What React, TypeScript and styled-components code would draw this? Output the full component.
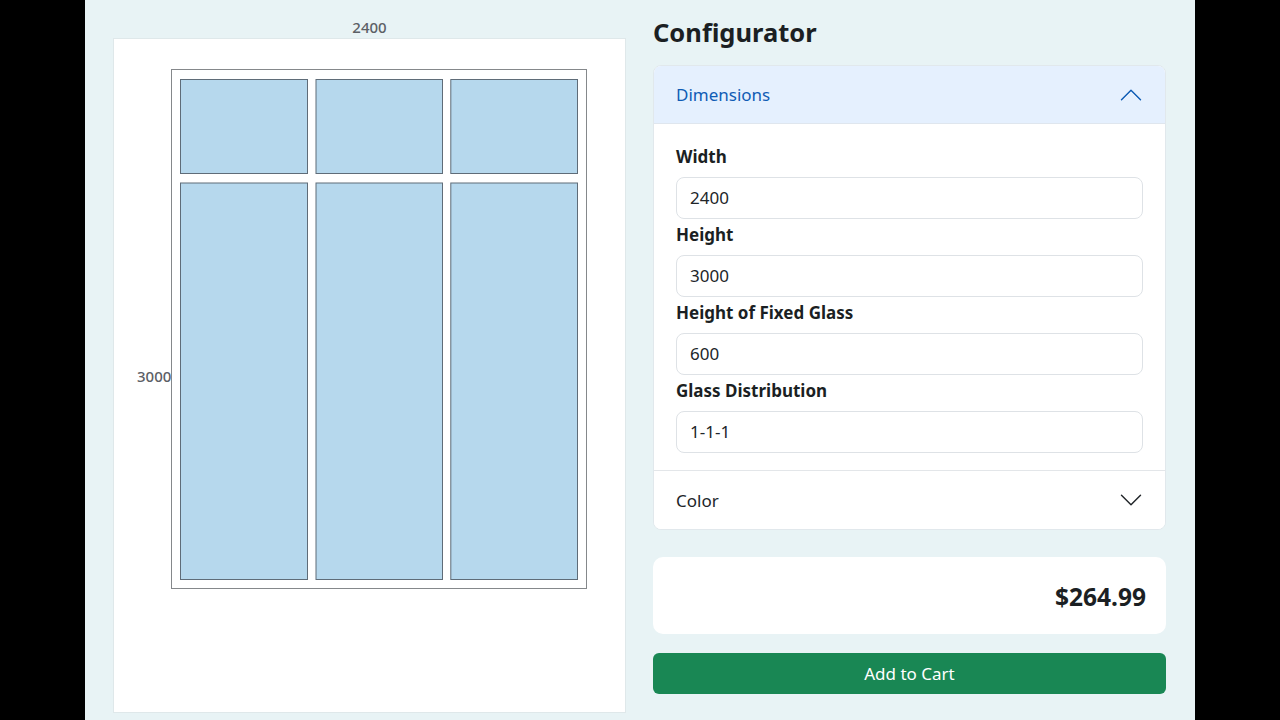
import styled, { createGlobalStyle } from "styled-components";
import { ChevronDown, ChevronUp } from "lucide-react";

const GlobalStyle = createGlobalStyle`
  html, body {
    margin: 0;
    height: 100%;
    background: #000;
    font-family: "Noto Sans", "Open Sans", sans-serif;
    color: #1b1f23;
  }
`;

const Stage = styled.div`
  width: 1110px;
  height: 720px;
  margin: 0 auto;
  box-sizing: border-box;
  padding: 0 29px 0 28px;
  background: #e8f3f5;
  display: grid;
  grid-template-columns: 513px 513px;
  column-gap: 27px;
  overflow: hidden;
`;

const PreviewColumn = styled.div`
  display: flex;
  flex-direction: column;
  align-items: center;
  padding-top: 16px;
`;

const WidthLabel = styled.div`
  height: 22px;
  line-height: 22px;
  font-size: 15px;
  font-weight: 500;
  color: #5c6066;
`;

const PreviewCard = styled.div`
  width: 100%;
  height: 675px;
  box-sizing: border-box;
  background: #fff;
  border: 1px solid #dfe8ea;
  padding: 30px 0 0 23px;
  display: flex;
  align-items: flex-start;
`;

const HeightLabel = styled.div`
  width: 34px;
  height: 613px;
  display: flex;
  align-items: center;
  font-size: 15px;
  font-weight: 500;
  color: #5c6066;
  white-space: nowrap;
`;

const ConfigColumn = styled.div`
  display: flex;
  flex-direction: column;
  padding-top: 14px;
`;

const Title = styled.h1`
  margin: 0 0 14px;
  height: 37px;
  line-height: 37px;
  font-size: 25.5px;
  font-weight: 700;
  color: #1b1f23;
`;

const Accordion = styled.div`
  height: 465px;
  box-sizing: border-box;
  background: #fff;
  border: 1px solid #e1e8ec;
  border-radius: 8px;
  overflow: hidden;
  display: flex;
  flex-direction: column;
`;

const AccordionHeader = styled.div<{ $open?: boolean }>`
  height: 58px;
  flex: none;
  box-sizing: border-box;
  padding: 0 22px;
  display: flex;
  align-items: center;
  justify-content: space-between;
  font-size: 17px;
  background: ${({ $open }) => ($open ? "#e5f0fe" : "#fff")};
  color: ${({ $open }) => ($open ? "#0f5cb5" : "#212529")};
  border-bottom: ${({ $open }) => ($open ? "1px solid #dfe6ee" : "none")};
`;

const AccordionBody = styled.div`
  flex: 1;
  box-sizing: border-box;
  padding: 20px 22px 0;
  border-bottom: 1px solid #e3e6e9;
`;

const Field = styled.div`
  height: 78px;
  display: flex;
  flex-direction: column;
`;

const FieldLabel = styled.label`
  height: 33px;
  line-height: 26px;
  font-size: 17px;
  font-weight: 700;
  color: #1b1f23;
`;

const FieldInput = styled.input`
  width: 100%;
  height: 42px;
  box-sizing: border-box;
  padding: 0 13px 1px;
  border: 1px solid #dee2e6;
  border-radius: 8px;
  background: #fff;
  font-family: inherit;
  font-size: 17px;
  color: #212529;
`;

const OpenChevron = styled(ChevronUp)`
  margin-right: -7px;
`;

const ClosedChevron = styled(ChevronDown)`
  margin-right: -7px;
`;

const PriceCard = styled.div`
  margin-top: 27px;
  height: 77px;
  box-sizing: border-box;
  padding: 2px 20px 0;
  background: #fff;
  border-radius: 10px;
  display: flex;
  align-items: center;
  justify-content: flex-end;
  font-size: 24.5px;
  font-weight: 700;
  color: #1b1f23;
`;

const CartButton = styled.button`
  margin-top: 19px;
  height: 41px;
  border: none;
  border-radius: 6px;
  background: #198754;
  color: #fff;
  font-family: inherit;
  font-size: 17px;
`;

const fields = [
  { label: "Width", value: "2400" },
  { label: "Height", value: "3000" },
  { label: "Height of Fixed Glass", value: "600" },
  { label: "Glass Distribution", value: "1-1-1" },
];

const paneColumns = [
  { x: 9.5, width: 127 },
  { x: 145, width: 126.5 },
  { x: 279.8, width: 126.7 },
];

const paneRows = [
  { y: 10.5, height: 94 },
  { y: 114, height: 396.5 },
];

const WindowDrawing = () => (
  <svg width="417" height="521" viewBox="0 0 417 521" style={{ display: "block", flex: "none" }}>
    <rect x="0.5" y="0.5" width="415" height="519" fill="#fff" stroke="#85888b" />
    {paneRows.map((row) =>
      paneColumns.map((col) => (
        <rect
          key={`${row.y}-${col.x}`}
          x={col.x}
          y={row.y}
          width={col.width}
          height={row.height}
          fill="#b6d8ed"
          stroke="#5f6c78"
        />
      ))
    )}
  </svg>
);

export default function App() {
  return (
    <>
      <GlobalStyle />
      <Stage>
        <PreviewColumn>
          <WidthLabel>2400</WidthLabel>
          <PreviewCard>
            <HeightLabel>3000</HeightLabel>
            <WindowDrawing />
          </PreviewCard>
        </PreviewColumn>
        <ConfigColumn>
          <Title>Configurator</Title>
          <Accordion>
            <AccordionHeader $open>
              Dimensions
              <OpenChevron size={38} strokeWidth={0.9} color="#0f5cb5" />
            </AccordionHeader>
            <AccordionBody>
              {fields.map((field) => (
                <Field key={field.label}>
                  <FieldLabel>{field.label}</FieldLabel>
                  <FieldInput defaultValue={field.value} />
                </Field>
              ))}
            </AccordionBody>
            <AccordionHeader>
              Color
              <ClosedChevron size={38} strokeWidth={0.9} color="#212529" />
            </AccordionHeader>
          </Accordion>
          <PriceCard>$264.99</PriceCard>
          <CartButton>Add to Cart</CartButton>
        </ConfigColumn>
      </Stage>
    </>
  );
}
